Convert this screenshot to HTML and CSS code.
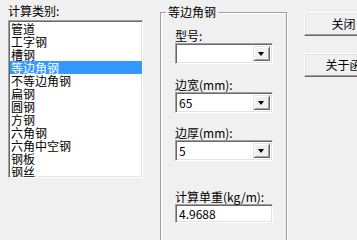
FILE: index.html
```html
<!DOCTYPE html>
<html lang="zh-CN">
<head>
	<meta charset="UTF-8">
	<title>钢材重量计算</title>
	<link rel="stylesheet" href="styles.css">
</head>
<body>
	<div id="win">
		<div class="left">
			<div class="cap">计算类别:</div>
			<ul class="list">
				<li>管道</li>
				<li>工字钢</li>
				<li>槽钢</li>
				<li class="sel">等边角钢</li>
				<li>不等边角钢</li>
				<li>扁钢</li>
				<li>圆钢</li>
				<li>方钢</li>
				<li>六角钢</li>
				<li>六角中空钢</li>
				<li>钢板</li>
				<li>钢丝</li>
			</ul>
		</div>
		<fieldset class="group">
			<legend>等边角钢</legend>
			<div class="cap">型号:</div>
			<div class="combo"><span class="val"></span><span class="drop"></span></div>
			<div class="cap gap">边宽(mm):</div>
			<div class="combo"><span class="val">65</span><span class="drop"></span></div>
			<div class="cap gap2">边厚(mm):</div>
			<div class="combo"><span class="val">5</span><span class="drop"></span></div>
			<div class="cap gap3">计算单重(kg/m):</div>
			<div class="edit">4.9688</div>
		</fieldset>
		<div class="btns">
			<a href="javascript:;" class="btn">关闭</a>
			<a href="javascript:;" class="btn">关于函</a>
		</div>
	</div>
</body>
</html>
```

FILE: styles.css
```css
body {
	margin: 0;
	background-color: #f0f0f0;
	font-family: "Noto Sans CJK SC", "DejaVu Sans", sans-serif;
	font-size: 12px;
	color: #000;
	overflow: hidden;
}
#win {
	display: flex;
	align-items: flex-start;
	width: 400px;
	height: 240px;
}
.cap {
	height: 14px;
	line-height: 14px;
	white-space: nowrap;
}
.left {
	margin-left: 8px;
	padding-top: 4px;
	width: 135px;
}
.left .cap {
	height: 16px;
}
.list {
	margin: 0;
	padding: 1px 0 0 0;
	list-style: none;
	height: 155px;
	overflow: hidden;
	background: #fff;
	border: 1px solid;
	border-color: #a0a0a0 #fff #fff #a0a0a0;
	box-shadow: inset 1px 1px #696969, inset -1px -1px #e3e3e3;
}
.list li {
	height: 13px;
	line-height: 13px;
	margin-left: 1px;
	padding-left: 1px;
	white-space: nowrap;
}
.list .sel {
	background-color: #3399ff;
	color: #fff;
}
.group {
	margin: 5px 0 0 17px;
	padding: 10px 0 0 14px;
	width: 111px;
	height: 260px;
	border: 1px solid #a0a0a0;
	box-shadow: inset 1px 1px #fff, 1px 1px #fff;
	min-width: 0;
}
.group legend {
	margin-left: -9px;
	padding: 0 2px;
	line-height: 14px;
}
.combo {
	display: flex;
	width: 92px;
	height: 15px;
	background: #fff;
	border: 1px solid;
	border-color: #a0a0a0 #fff #fff #a0a0a0;
	box-shadow: inset 1px 1px #696969, inset -1px -1px #e3e3e3;
	padding: 2px;
}
.val {
	flex: 1;
	line-height: 15px;
	padding-left: 1px;
}
.drop {
	position: relative;
	width: 15px;
	height: 13px;
	background: #f0f0f0;
	border: 1px solid;
	border-color: #e3e3e3 #696969 #696969 #e3e3e3;
	box-shadow: inset 1px 1px #fff, inset -1px -1px #a0a0a0;
}
.drop::after {
	content: "";
	position: absolute;
	left: 4px;
	top: 5px;
	border-left: 3px solid transparent;
	border-right: 3px solid transparent;
	border-top: 4px solid #000;
}
.gap {
	margin-top: 14px;
}
.gap2 {
	margin-top: 13px;
}
.gap3 {
	margin-top: 29px;
}
.edit {
	width: 91px;
	height: 13px;
	line-height: 13px;
	background: #fff;
	border: 1px solid;
	border-color: #a0a0a0 #fff #fff #a0a0a0;
	box-shadow: inset 1px 1px #696969, inset -1px -1px #e3e3e3;
	padding: 2px 2px 2px 3px;
}
.btns {
	display: flex;
	flex-direction: column;
	gap: 17px;
	margin-left: 17px;
	padding-top: 12px;
}
.btn {
	display: block;
	width: 77px;
	height: 22px;
	line-height: 22px;
	text-align: center;
	text-decoration: none;
	color: #000;
	background: #f0f0f0;
	border: 1px solid;
	border-color: #fff #696969 #696969 #fff;
	box-shadow: inset -1px -1px #a0a0a0, inset 1px 1px #e3e3e3;
}
```
